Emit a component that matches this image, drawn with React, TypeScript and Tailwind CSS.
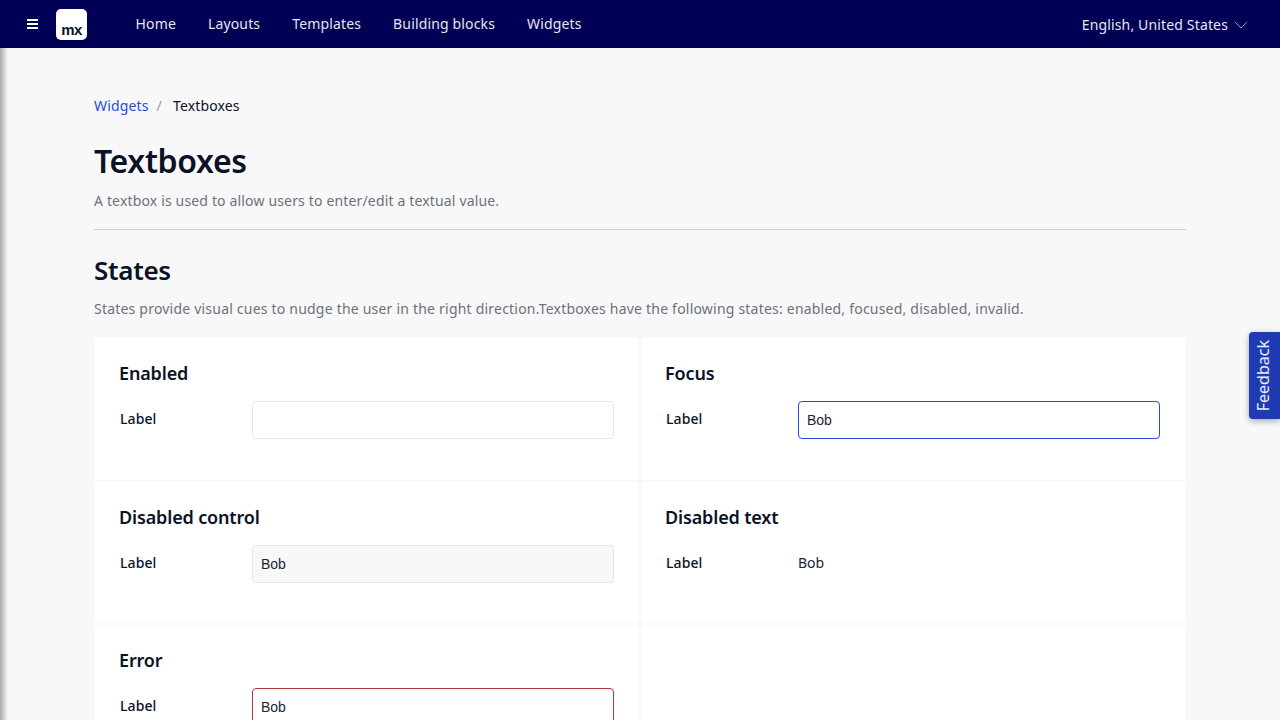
import { ChevronDown } from "lucide-react";

const navItems = ["Home", "Layouts", "Templates", "Building blocks", "Widgets"];

function Field({ children }: { children?: React.ReactNode }) {
  return (
    <div className="mt-4 flex items-start">
      <label className="w-[133px] pl-px pt-[7px] text-sm leading-[22px] font-[550] tracking-[0.1px] text-[#0a1326]">Label</label>
      {children}
    </div>
  );
}

function TextBox({ value, className }: { value?: string; className: string }) {
  return (
    <div className={`flex h-[38px] w-[362px] items-center rounded border px-2 font-['Liberation_Sans',sans-serif] text-sm text-[#1c2436] ${className}`}>
      {value}
    </div>
  );
}

function Cell({ title, children }: { title?: string; children?: React.ReactNode }) {
  return (
    <div className="bg-white px-6 pt-6">
      {title && <h3 className="text-lg leading-[23px] font-semibold tracking-[-0.15px] text-[#0a1326]">{title}</h3>}
      {children}
    </div>
  );
}

export default function App() {
  return (
    <div className="relative h-[720px] w-[1280px] overflow-hidden bg-[#f8f8f8] font-['Noto_Sans',sans-serif]">
      <header className="flex h-12 items-center bg-[#000055] text-sm tracking-[0.15px] text-[#e6e6ee]">
        <div className="ml-[27px] flex w-[11px] flex-col gap-[2px]">
          <span className="h-[2px] bg-white" />
          <span className="h-[2px] bg-white" />
          <span className="h-[2px] bg-white" />
        </div>
        <div className="ml-[18px] flex h-[31px] w-[31px] items-end justify-center rounded-[5px] bg-white pb-[2px]">
          <span className="font-['Liberation_Sans',sans-serif] text-[15px] leading-[17px] font-bold tracking-[-0.5px] text-[#0a1326]">mx</span>
        </div>
        <nav className="ml-[48.5px] flex gap-8 pb-[1px]">
          {navItems.map((item) => (
            <a key={item}>{item}</a>
          ))}
        </nav>
        <div className="ml-auto mr-[27px] flex items-center gap-px pt-[2px]">
          <span>English, United States</span>
          <ChevronDown size={24} strokeWidth={0.75} className="text-[#c4c4d8]" />
        </div>
      </header>

      <div className="absolute top-12 bottom-0 left-0 w-2 bg-gradient-to-r from-[#a8a8a8] to-transparent" />

      <main className="mx-[94px] pt-[47px]">
        <div className="flex items-center text-sm leading-[22px] tracking-[0.15px]">
          <a className="text-[#264ae5]">Widgets</a>
          <span className="mx-2 text-[#9a9a9a]">/</span>
          <span className="ml-[3px] text-[#0a1326]">Textboxes</span>
        </div>
        <h1 className="mt-6 text-[32px] leading-[40px] font-semibold tracking-[-0.35px] text-[#0a1326]">Textboxes</h1>
        <p className="mt-[9px] text-sm leading-[22px] tracking-[0.16px] text-[#6c717e]">A textbox is used to allow users to enter/edit a textual value.</p>
        <hr className="mt-[17px] border-t border-[#cfcfcf]" />
        <h2 className="mt-[23px] text-[26px] leading-[34px] font-semibold tracking-[-0.3px] text-[#0a1326]">States</h2>
        <p className="mt-[11px] text-sm leading-[22px] tracking-[0.21px] text-[#6c717e]">
          States provide visual cues to nudge the user in the right direction.Textboxes have the following states: enabled, focused, disabled, invalid.
        </p>
        <div className="mt-[18px] mr-px ml-px grid grid-cols-2 gap-[2px] [grid-auto-rows:141.5px]">
          <Cell title="Enabled">
            <Field>
              <TextBox className="border-[#e7e7e9] bg-white" />
            </Field>
          </Cell>
          <Cell title="Focus">
            <Field>
              <TextBox value="Bob" className="border-[#264ae5] bg-white" />
            </Field>
          </Cell>
          <Cell title="Disabled control">
            <Field>
              <TextBox value="Bob" className="border-[#e7e7e9] bg-[#f8f8f8]" />
            </Field>
          </Cell>
          <Cell title="Disabled text">
            <Field>
              <span className="pt-[7px] text-sm leading-[22px] text-[#1c2436]">Bob</span>
            </Field>
          </Cell>
          <Cell title="Error">
            <Field>
              <TextBox value="Bob" className="border-[#b33a3a] bg-white" />
            </Field>
          </Cell>
          <Cell />
        </div>
      </main>

      <div className="absolute top-[332px] right-0 flex h-[87px] w-[31px] items-center justify-center rounded-l bg-[#1f3bb3] text-[#e8ebf8] shadow-[0_2px_6px_rgba(0,0,0,0.35)]">
        <span className="-ml-[3px] rotate-180 text-base [writing-mode:vertical-rl]">Feedback</span>
      </div>
    </div>
  );
}
